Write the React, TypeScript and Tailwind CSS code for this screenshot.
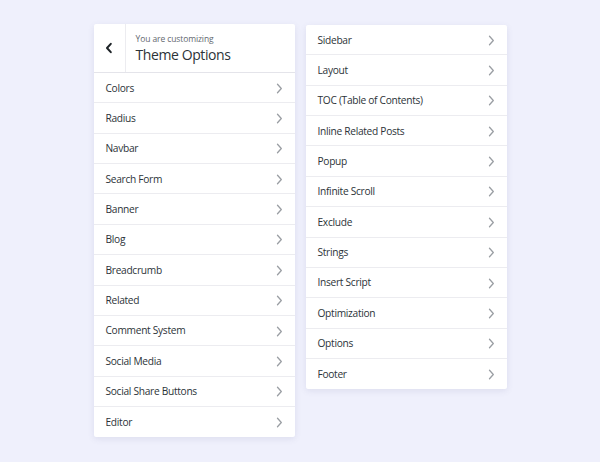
import React from "react";

const left = [
  "Colors",
  "Radius",
  "Navbar",
  "Search Form",
  "Banner",
  "Blog",
  "Breadcrumb",
  "Related",
  "Comment System",
  "Social Media",
  "Social Share Buttons",
  "Editor",
];

const right = [
  "Sidebar",
  "Layout",
  "TOC (Table of Contents)",
  "Inline Related Posts",
  "Popup",
  "Infinite Scroll",
  "Exclude",
  "Strings",
  "Insert Script",
  "Optimization",
  "Options",
  "Footer",
];

function Chevron() {
  return (
    <svg width="7" height="11" viewBox="0 0 7 11" fill="none" className="shrink-0">
      <path d="M1.5 1.2 L5.3 5.5 L1.5 9.8" stroke="#9a9ea3" strokeWidth="1.3" strokeLinecap="round" strokeLinejoin="round" />
    </svg>
  );
}

function Row({ label, last }: { label: string; last: boolean }) {
  return (
    <div
      className={
        "flex h-[30.36px] items-center justify-between pl-3 pr-[12px] pt-[1px] " +
        (last ? "" : "border-b border-[#ececf0]")
      }
    >
      <span className="text-[10.2px] tracking-[-0.3px] text-[#2c3338]">{label}</span>
      <Chevron />
    </div>
  );
}

export default function App() {
  return (
    <div
      className="flex h-[462px] w-[600px] items-start justify-center gap-[11px] bg-[#eff0fc] pt-[24px]"
      style={{ fontFamily: '"Open Sans", "Noto Sans", sans-serif' }}
    >
      <div className="w-[201px] rounded-[2px] bg-white shadow-[0_2px_6px_rgba(90,90,140,0.12)]">
        <div className="flex h-[49px] border-b border-[#e4e4ea]">
          <div className="flex w-[32px] items-center justify-center border-r border-[#ececf0]">
            <svg width="8" height="12" viewBox="0 0 8 12" fill="none">
              <path d="M5.8 1.8 L2 6 L5.8 10.2" stroke="#1d2327" strokeWidth="2" strokeLinecap="round" strokeLinejoin="round" />
            </svg>
          </div>
          <div className="flex flex-col justify-center pl-[10px] pt-[2px]">
            <span className="text-[8.5px] leading-[12px] tracking-[-0.1px] text-[#646970]">You are customizing</span>
            <span className="text-[14px] leading-[20px] tracking-[-0.4px] text-[#2c3338]">Theme Options</span>
          </div>
        </div>
        {left.map((l, i) => (
          <Row key={l} label={l} last={i === left.length - 1} />
        ))}
      </div>
      <div className="mt-[1px] w-[201px] rounded-[2px] bg-white shadow-[0_2px_6px_rgba(90,90,140,0.12)]">
        {right.map((l, i) => (
          <Row key={l} label={l} last={i === right.length - 1} />
        ))}
      </div>
    </div>
  );
}
